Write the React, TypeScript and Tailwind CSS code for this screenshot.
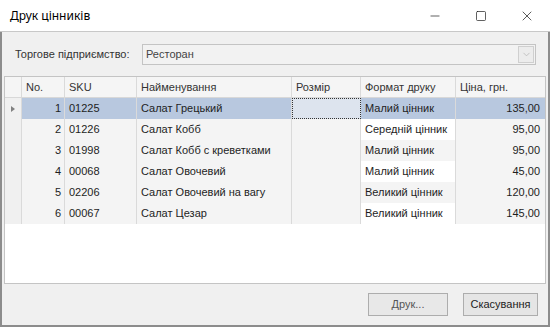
import { ChevronDown, Minus, Square, X } from "lucide-react";

type Row = { no: number; sku: string; name: string; format: string; price: string };

const rows: Row[] = [
  { no: 1, sku: "01225", name: "Салат Грецький", format: "Малий цінник", price: "135,00" },
  { no: 2, sku: "01226", name: "Салат Кобб", format: "Середній цінник", price: "95,00" },
  { no: 3, sku: "01998", name: "Салат Кобб с креветками", format: "Малий цінник", price: "95,00" },
  { no: 4, sku: "00068", name: "Салат Овочевий", format: "Малий цінник", price: "45,00" },
  { no: 5, sku: "02206", name: "Салат Овочевий на вагу", format: "Великий цінник", price: "120,00" },
  { no: 6, sku: "00067", name: "Салат Цезар", format: "Великий цінник", price: "145,00" },
];

const cols = "grid grid-cols-[17px_43px_72px_155px_69px_95px_1fr]";

export default function App() {
  return (
    <div className="flex h-[327px] w-[550px] flex-col bg-white font-['Liberation_Sans',sans-serif] text-[11px] text-[#1e1e1e]">
      <div className="flex h-[32px] shrink-0 items-center border-b border-[#c8c8c8] bg-white">
        <span className="pl-[10px] font-['Noto_Sans',sans-serif] text-[12px] text-black">Друк цінників</span>
        <div className="ml-auto flex h-full items-center">
          <span className="flex w-[46px] justify-center"><Minus size={14} strokeWidth={1.2} /></span>
          <span className="flex w-[46px] justify-center"><Square size={12} strokeWidth={1.4} /></span>
          <span className="flex w-[46px] justify-center"><X size={16} strokeWidth={1.1} /></span>
        </div>
      </div>

      <div className="flex min-h-0 flex-1 flex-col border-x-2 border-b-2 border-[#8c8c8c] bg-[#f0f0f0]">
        <div className="flex h-[44px] shrink-0 items-center pl-[13px] pr-[12px]">
          <span className="w-[127px] text-[#333]">Торгове підприємство:</span>
          <div className="flex h-[21px] flex-1 items-center border border-[#c4c4c4] bg-[#f2f2f2] pl-[3px] text-[#444]">
            Ресторан
            <span className="ml-auto mr-[1px] flex h-[17px] w-[16px] items-center justify-center border border-[#cfcfcf] bg-[#ececec] text-[#b0b0b0]">
              <ChevronDown size={11} strokeWidth={1.5} />
            </span>
          </div>
        </div>

        <div className="mx-[2px] flex min-h-0 flex-1 flex-col border border-[#c4c4c4] bg-white">
          <div className={`${cols} h-[21px] shrink-0 border-b border-[#d8d8d8] bg-[#f5f5f5] text-[#333]`}>
            <div className="border-r border-[#dadada]" />
            {["No.", "SKU", "Найменування", "Розмір", "Формат друку", "Ціна, грн."].map((h) => (
              <div key={h} className="flex items-center border-r border-[#dadada] pl-[4px] last:border-r-0">{h}</div>
            ))}
          </div>
          {rows.map((r, i) => {
            const sel = i === 0;
            const base = sel ? "bg-[#b8c8df]" : "bg-[#f4f4f4]";
            const fmt = sel ? "bg-[#b8c8df]" : i % 2 === 1 ? "bg-white" : "bg-[#f4f4f4]";
            return (
              <div key={r.no} className={`${cols} h-[21px] shrink-0`}>
                <div className="flex items-center justify-center border-r border-[#dadada] bg-[#f0f0f0]">
                  {sel && <span className="h-0 w-0 border-y-[3.5px] border-l-[4px] border-y-transparent border-l-[#808080]" />}
                </div>
                <div className={`${base} flex items-center justify-end border-r border-[#dadada] pr-[3px]`}>{r.no}</div>
                <div className={`${base} flex items-center border-r border-[#dadada] pl-[4px]`}>{r.sku}</div>
                <div className={`${base} flex items-center border-r border-[#dadada] pl-[4px]`}>{r.name}</div>
                <div className={`${sel ? "border border-dotted border-[#333] bg-[#dde4ee]" : `${base} border-r border-[#dadada]`}`} />
                <div className={`${fmt} flex items-center border-r border-[#dadada] pl-[4px]`}>{r.format}</div>
                <div className={`${base} flex items-center justify-end pr-[5px]`}>{r.price}</div>
              </div>
            );
          })}
          <div className="flex-1 bg-white" />
        </div>

        <div className="flex h-[41px] shrink-0 items-center justify-end gap-[15px] pr-[10px]">
          <button className="h-[23px] w-[80px] border border-[#adadad] bg-[#e8e8e8] text-[#555]">Друк...</button>
          <button className="h-[23px] w-[75px] border border-[#adadad] bg-[#e5e5e5] text-[#222]">Скасування</button>
        </div>
      </div>
    </div>
  );
}
